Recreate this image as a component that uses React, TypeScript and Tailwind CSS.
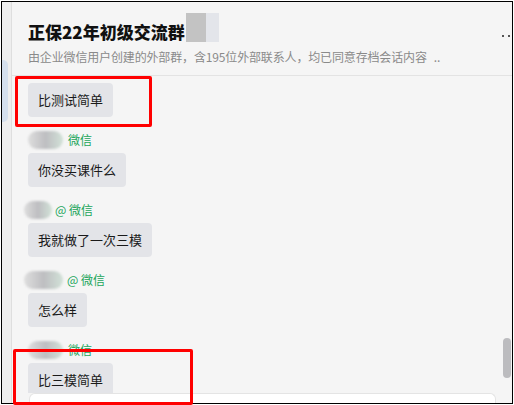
const FONT = { fontFamily: '"Noto Sans CJK SC", "Noto Sans", sans-serif' }

type Msg = {
  text: string
  name?: { blob: number; shift: number; at: boolean; gap: number }
}

const MESSAGES: Msg[] = [
  { text: '比测试简单' },
  { text: '你没买课件么', name: { blob: 35, shift: 0, at: false, gap: 5 } },
  { text: '我就做了一次三模', name: { blob: 28, shift: -4, at: true, gap: 3 } },
  { text: '怎么样', name: { blob: 39, shift: -4, at: true, gap: 4 } },
  { text: '比三模简单', name: { blob: 35, shift: 0, at: false, gap: 5 } },
]

function NameRow({ blob, shift, at, gap }: NonNullable<Msg['name']>) {
  return (
    <div className="mt-[14px] mb-[4px] h-[18px] flex items-center">
      <div
        className="h-[18px] rounded-full bg-linear-to-r from-[#dedede] via-[#bebec1] to-[#d2e2d8] blur-[0.8px]"
        style={{ width: blob, marginLeft: shift, marginRight: gap }}
      />
      <span className="text-[12px] leading-[18px] text-[#22a55b]">
        {at ? '@ 微信' : '微信'}
      </span>
    </div>
  )
}

export default function App() {
  return (
    <div className="relative w-[514px] h-[405px] bg-white p-px" style={FONT}>
      <div className="w-[512px] h-[403px] border border-black flex overflow-hidden bg-[#f5f5f5]">
        {/* side list edge */}
        <div className="w-[10px] shrink-0 bg-[#eeeeee] border-r border-[#dedede]">
          <div className="mt-[58px] w-[6px] h-[62px] rounded-r-[5px] bg-[#d4dfed]" />
        </div>

        <div className="relative flex-1 min-w-0 flex flex-col">
          {/* header */}
          <div className="h-[74px] shrink-0 flex border-b border-[#e3e3e3]">
            <div className="flex-1 min-w-0 pl-[16px] pt-[18px]">
              <div className="h-[24px] flex items-center">
                <span className="text-[17px] leading-[24px] font-black text-[#111]">
                  正保22年初级交流群
                </span>
                <div className="ml-[1px] mb-[10px] h-[29px] flex shrink-0">
                  <div className="w-[20px] bg-[#c3c3c3]" />
                  <div className="w-[13px] bg-[#e3e5ea]" />
                </div>
              </div>
              <p className="mt-[5px] text-[12px] leading-[16px] tracking-[-0.15px] text-[#8a8a8a] whitespace-nowrap">
                由企业微信用户创建的外部群，含195位外部联系人，均已同意存档会话内容
                <span className="ml-[7px]">..</span>
              </p>
            </div>
            <div className="w-[10px] shrink-0 pt-[33px]">
              <div className="flex gap-[4px]">
                <span className="w-[2px] h-[2px] shrink-0 bg-[#555]" />
                <span className="w-[2px] h-[2px] shrink-0 bg-[#555]" />
                <span className="w-[2px] h-[2px] shrink-0 bg-[#555]" />
              </div>
            </div>
          </div>

          {/* messages */}
          <div className="flex-1 min-h-0 overflow-hidden pl-[16px] pt-[7px] flex flex-col items-start">
            {MESSAGES.map((m) => (
              <div key={m.text} className="flex flex-col items-start">
                {m.name && <NameRow {...m.name} />}
                <div className="h-[34px] shrink-0 px-[10px] flex items-center rounded-[4px] bg-[#e3e4e8] text-[13px] text-[#1a1a1a]">
                  {m.text}
                </div>
              </div>
            ))}
          </div>

          {/* input box */}
          <div className="h-[10px] shrink-0 ml-[17px] mr-[16px] rounded-t-[6px] border border-b-0 border-[#e4e4e4] bg-white" />

          {/* scroll thumb */}
          <div className="absolute right-[1px] top-[336px] w-[8px] h-[40px] rounded-full bg-[#bcbcbf]" />
        </div>
      </div>

      {/* annotation boxes */}
      <div className="absolute left-[15px] top-[76px] w-[137px] h-[51px] border-[3px] border-[#ff0000] rounded-[2px]" />
      <div className="absolute left-[13px] top-[349px] w-[180px] h-[56px] border-[3px] border-[#ff0000] rounded-[2px]" />
    </div>
  )
}
